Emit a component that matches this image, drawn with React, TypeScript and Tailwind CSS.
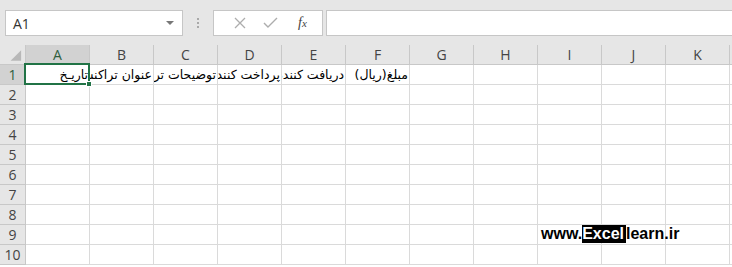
import React from "react";

const columns = ["A", "B", "C", "D", "E", "F", "G", "H", "I", "J", "K", "L"];
const rows = [1, 2, 3, 4, 5, 6, 7, 8, 9, 10];

// متن‌های ردیف اول
const firstRow: Record<string, string> = {
	A: "تاریـخ",
	B: "عنوان تراکنش",
	C: "توضیحات تراکنش",
	D: "پرداخت کننده",
	E: "دریافت کننده",
	F: "مبلغ(ریال)",
};

function Toolbar() {
	return (
		<div className="h-[45px] bg-[#e6e6e6] flex items-start pt-[10px]">
			{/* Name box */}
			<div className="ml-[5px] w-[178px] h-[26px] bg-white border border-[#c6c6c6] flex items-center justify-between pl-[7px] pr-[8px]">
				<span className="text-[14px] text-[#333] font-['Open_Sans','Liberation_Sans',sans-serif]">
					A1
				</span>
				<svg width="8" height="5" viewBox="0 0 8 5">
					<path d="M0 0 L8 0 L4 4 Z" fill="#777" />
				</svg>
			</div>
			{/* splitter */}
			<div className="w-[30px] h-[26px] flex flex-col items-center justify-center gap-[2px]">
				<div className="w-[2px] h-[2px] bg-[#a9a9a9]" />
				<div className="w-[2px] h-[2px] bg-[#a9a9a9]" />
				<div className="w-[2px] h-[2px] bg-[#a9a9a9]" />
			</div>
			{/* cancel / enter / fx */}
			<div className="w-[110px] h-[26px] bg-white border border-[#c6c6c6] flex items-center">
				<svg className="ml-[20px]" width="12" height="12" viewBox="0 0 12 12">
					<path d="M1 1 L11 11 M11 1 L1 11" stroke="#adadad" strokeWidth="1.3" />
				</svg>
				<svg className="ml-[17px]" width="15" height="12" viewBox="0 0 15 12">
					<path d="M1 6 L5 10 L14 1" stroke="#adadad" strokeWidth="1.4" fill="none" />
				</svg>
				<span className="ml-[20px] text-[14px] italic text-[#444] font-['Liberation_Serif',serif] leading-none">
					f<span className="text-[11px]">x</span>
				</span>
			</div>
			{/* formula input */}
			<div className="ml-[3px] flex-1 h-[26px] bg-white border border-[#c6c6c6] border-r-0" />
		</div>
	);
}

export default function App() {
	return (
		<div className="relative w-[732px] h-[267px] overflow-hidden bg-white">
			<Toolbar />

			<div className="grid grid-cols-[26px_repeat(11,64px)_64px] grid-rows-[20px_repeat(10,20px)]">
				{/* گوشه بالا چپ */}
				<div className="bg-[#e6e6e6] border-r border-b border-[#c8c8c8] flex items-end justify-end">
					<svg width="26" height="20" viewBox="0 0 26 20">
						<path d="M22 6 L22 17 L11 17 Z" fill="#b8b8b8" />
					</svg>
				</div>
				{columns.map((c) => (
					<div
						key={c}
						className={`border-r border-b border-[#c8c8c8] flex items-center justify-center text-[14px] font-['Open_Sans','Liberation_Sans',sans-serif] ${
							c === "A" ? "bg-[#d2d2d2] text-[#2f5e3e]" : "bg-[#e6e6e6] text-[#444]"
						}`}
					>
						{c}
					</div>
				))}

				{rows.map((r) => (
					<React.Fragment key={r}>
						<div
							className={`border-r border-b border-[#c8c8c8] flex items-center justify-center text-[14px] font-['Open_Sans','Liberation_Sans',sans-serif] ${
								r === 1 ? "bg-[#d2d2d2] text-[#2f5e3e]" : "bg-[#e6e6e6] text-[#444]"
							}`}
						>
							{r}
						</div>
						{columns.map((c) => (
							<div
								key={c}
								className="relative border-r border-b border-[#dadada]"
							>
								{r === 1 && firstRow[c] && (
									<div
										dir="rtl"
										className="h-full overflow-hidden whitespace-nowrap text-right pr-[1px] text-[12.5px] leading-[19px] text-black font-['DejaVu_Sans',sans-serif]"
									>
										{firstRow[c]}
									</div>
								)}
								{r === 1 && c === "A" && (
									<>
										<div className="absolute z-10 -left-[2px] -top-[2px] w-[66px] h-[22px] border-2 border-[#217346]" />
										<div className="absolute z-20 -right-[3px] -bottom-[3px] w-[6px] h-[6px] bg-[#217346] border border-white" />
									</>
								)}
							</div>
						))}
					</React.Fragment>
				))}
			</div>

			{/* watermark */}
			<div className="absolute left-[541px] top-[225px] flex items-center text-[16px] font-bold leading-[18px] text-black font-['Liberation_Sans',sans-serif]">
				<span>www.</span>
				<span className="bg-black text-white pr-[2px]">Excel</span>
				<span>learn.ir</span>
			</div>
		</div>
	);
}
